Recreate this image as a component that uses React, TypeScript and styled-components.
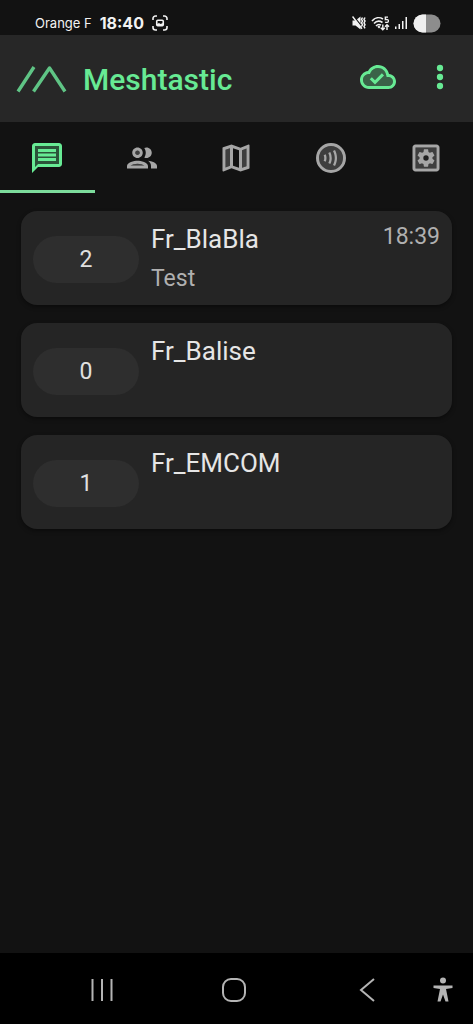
import React, { useState } from "react";
import styled, { createGlobalStyle } from "styled-components";

const GlobalStyle = createGlobalStyle`
  *, *::before, *::after { box-sizing: border-box; }
  body {
    margin: 0;
    background: #121212;
    font-family: Roboto, "Noto Sans", sans-serif;
  }
  button {
    margin: 0;
    padding: 0;
    border: 0;
    background: none;
    font: inherit;
    color: inherit;
    cursor: pointer;
  }
  svg { display: block; flex: none; }
`;

const Screen = styled.div`
  display: flex;
  flex-direction: column;
  min-height: 100vh;
`;

const StatusBar = styled.div`
  display: flex;
  justify-content: space-between;
  align-items: center;
  height: 35px;
  padding: 11px 32px 0 35px;
  color: #f2f2f2;
  font-family: Inter, sans-serif;
  font-size: 13px;
`;

const StatusGroup = styled.div<{ $gap: number }>`
  display: flex;
  align-items: center;
  gap: ${(p) => p.$gap}px;
`;

const Clock = styled.span`
  font-size: 16px;
  font-weight: 700;
`;

const Header = styled.header`
  display: flex;
  align-items: center;
  height: 87px;
  padding: 0 15px 0 16px;
  background: #272727;
  color: #67ea94;
`;

const Title = styled.h1`
  flex: 1;
  margin: 0 0 0 16px;
  padding-top: 2px;
  font-size: 30px;
  font-weight: 500;
  line-height: 36px;
`;

const Actions = styled.div`
  display: flex;
  gap: 26px;
  padding-bottom: 4px;
`;

const TabBar = styled.div`
  display: flex;
  height: 71px;
`;

const Tab = styled.button<{ $active: boolean }>`
  flex: 1;
  display: flex;
  align-items: center;
  justify-content: center;
  border-top: 3px solid transparent;
  border-bottom: 3px solid ${(p) => (p.$active ? "#7ddc9c" : "transparent")};
  color: ${(p) => (p.$active ? "#67ea94" : "#a6a6a6")};
`;

const ChannelList = styled.main`
  flex: 1;
  display: flex;
  flex-direction: column;
  gap: 18px;
  padding: 18px 21px;
`;

const ChannelCard = styled.button`
  display: flex;
  align-items: flex-start;
  min-height: 94px;
  padding: 12px 12px 10px;
  border-radius: 16px;
  background: #252525;
  box-shadow: 0 2px 4px rgba(0, 0, 0, 0.4);
  text-align: left;
`;

const ChannelIndex = styled.span`
  align-self: center;
  width: 106px;
  border-radius: 24px;
  background: #2e2e2e;
  color: #e0e0e0;
  font-size: 23px;
  line-height: 47px;
  text-align: center;
`;

const ChannelText = styled.span`
  flex: 1;
  display: flex;
  flex-direction: column;
  gap: 8px;
  margin-left: 12px;
  line-height: 32px;
`;

const ChannelName = styled.span`
  color: #e6e6e6;
  font-size: 26px;
`;

const LastMessage = styled.span`
  color: #b0b0b0;
  font-size: 23px;
`;

const Time = styled.time`
  color: #b0b0b0;
  font-size: 23px;
  line-height: 28px;
`;

const NavBar = styled.nav`
  display: flex;
  align-items: center;
  height: 71px;
  padding: 2px 20px 0 36px;
  background: #000;
  color: #b4b4b4;
`;

const NavButton = styled.button<{ $grow?: boolean }>`
  flex: ${(p) => (p.$grow ? "1" : "none")};
  display: flex;
  justify-content: center;
  align-items: center;
  height: 48px;
`;

const Icon = ({ children }: { children: React.ReactNode }) => (
  <svg width="36" height="36" viewBox="0 0 24 24" fill="currentColor" aria-hidden="true">
    {children}
  </svg>
);

const ChatIcon = () => (
  <Icon>
    <path opacity=".3" d="M4 18l2-2h14V4H4v14z" />
    <path d="M20 2H4c-1.1 0-1.99.9-1.99 2L2 22l4-4h14c1.1 0 2-.9 2-2V4c0-1.1-.9-2-2-2zm0 14H6l-2 2V4h16v12z" />
    <path d="M6 12h12v2H6zM6 9h12v2H6zM6 6h12v2H6z" />
  </Icon>
);

const PeopleIcon = () => (
  <Icon>
    <path opacity=".3" d="M4.34 17h9.32c-.84-.58-2.87-1.25-4.66-1.25s-3.82.67-4.66 1.25z" />
    <circle opacity=".3" cx="9" cy="8.5" r="1.5" />
    <path d="M9 12c1.93 0 3.5-1.57 3.5-3.5S10.93 5 9 5 5.5 6.57 5.5 8.5 7.07 12 9 12zm0-5c.83 0 1.5.67 1.5 1.5S9.83 10 9 10s-1.5-.67-1.5-1.5S8.17 7 9 7zm0 6.75c-2.34 0-7 1.17-7 3.5V19h14v-1.75c0-2.33-4.66-3.5-7-3.5zM4.34 17c.84-.58 2.87-1.25 4.66-1.25s3.82.67 4.66 1.25H4.34zm11.7-3.19c1.16.84 1.96 1.96 1.96 3.44V19h4v-1.75c0-2.02-3.5-3.17-5.96-3.44zM15 12c1.93 0 3.5-1.57 3.5-3.5S16.93 5 15 5c-.54 0-1.04.13-1.5.35.63.89 1 1.98 1 3.15s-.37 2.26-1 3.15c.46.22.96.35 1.5.35z" />
  </Icon>
);

const MapIcon = () => (
  <Icon>
    <path opacity=".3" d="M5 18.31l3-1.16V5.45L5 6.46zm11 .24l3-1.01V5.69l-3 1.17z" />
    <path d="M20.5 3l-.16.03L15 5.1 9 3 3.36 4.9c-.21.07-.36.25-.36.48V20.5c0 .28.22.5.5.5l.16-.03L9 18.9l6 2.1 5.64-1.9c.21-.07.36-.25.36-.48V3.5c0-.28-.22-.5-.5-.5zM8 17.15l-3 1.16V6.46l3-1.01v11.7zm6 1.38l-4-1.4V5.47l4 1.4v11.66zm5-.99l-3 1.01V6.86l3-1.16v11.84z" />
  </Icon>
);

const ContactlessIcon = () => (
  <Icon>
    <circle cx="12" cy="12" r="8" opacity=".3" />
    <circle cx="12" cy="12" r="9" fill="none" stroke="currentColor" strokeWidth="2" />
    <path d="M7.1 10.18c.26.56.39 1.16.4 1.8.01.63-.13 1.25-.4 1.86l1.37.62c.37-.81.55-1.65.54-2.5-.01-.84-.19-1.65-.54-2.4zM13.33 7.33c.78 1.57 1.18 3.14 1.18 4.64 0 1.51-.4 3.09-1.18 4.69l1.35.66c.88-1.81 1.33-3.61 1.33-5.35 0-1.74-.45-3.53-1.33-5.31zM10.2 8.72c.53 1.07.8 2.21.8 3.4 0 1.17-.26 2.23-.78 3.15l1.3.74c.65-1.15.98-2.45.98-3.89 0-1.42-.32-2.79-.96-4.07z" />
  </Icon>
);

const SettingsIcon = () => (
  <Icon>
    <path opacity=".3" d="M5 5h14v14H5z" />
    <path d="M19 3H5c-1.11 0-2 .9-2 2v14c0 1.1.89 2 2 2h14c1.11 0 2-.9 2-2V5c0-1.1-.89-2-2-2zm0 16H5V5h14v14z" />
    <path
      transform="translate(4.8 4.8) scale(.6)"
      d="M19.14 12.94c.04-.3.06-.61.06-.94 0-.32-.02-.64-.07-.94l2.03-1.58c.18-.14.23-.41.12-.61l-1.92-3.32c-.12-.22-.37-.29-.59-.22l-2.39.96c-.5-.38-1.03-.7-1.62-.94l-.36-2.54c-.04-.24-.24-.41-.48-.41h-3.84c-.24 0-.43.17-.47.41l-.36 2.54c-.59.24-1.13.57-1.62.94l-2.39-.96c-.22-.08-.47 0-.59.22L2.74 8.87c-.12.21-.08.47.12.61l2.03 1.58c-.05.3-.09.63-.09.94s.02.64.07.94l-2.03 1.58c-.18.14-.23.41-.12.61l1.92 3.32c.12.22.37.29.59.22l2.39-.96c.5.38 1.03.7 1.62.94l.36 2.54c.05.24.24.41.48.41h3.84c.24 0 .44-.17.47-.41l.36-2.54c.59-.24 1.13-.56 1.62-.94l2.39.96c.22.08.47 0 .59-.22l1.92-3.32c.12-.22.07-.47-.12-.61l-2.01-1.58z"
    />
    <circle cx="12" cy="12" r="1.8" fill="#202020" />
  </Icon>
);

const CloudDoneIcon = () => (
  <Icon>
    <path opacity=".3" d="M19.21 12.04l-1.53-.11-.3-1.5C16.88 7.86 14.62 6 12 6 9.94 6 8.08 7.14 7.12 8.96l-.5.95-1.07.11C3.53 10.24 2 11.95 2 14c0 2.21 1.79 4 4 4h13c1.65 0 3-1.35 3-3 0-1.55-1.22-2.86-2.79-2.96z" />
    <path d="M19.35 10.04C18.67 6.59 15.64 4 12 4 9.11 4 6.61 5.64 5.36 8.04 2.35 8.36 0 10.91 0 14c0 3.31 2.69 6 6 6h13c2.76 0 5-2.24 5-5 0-2.64-2.05-4.78-4.65-4.96zM19 18H6c-2.21 0-4-1.79-4-4 0-2.05 1.53-3.76 3.56-3.97l1.07-.11.5-.95C8.08 7.14 9.94 6 12 6c2.62 0 4.88 1.86 5.39 4.43l.3 1.5 1.53.11c1.56.1 2.78 1.41 2.78 2.96 0 1.65-1.35 3-3 3z" />
    <path d="M10 14.18l-2.09-2.09L6.5 13.5 10 17l6.01-6.01-1.41-1.41z" />
  </Icon>
);

const MoreIcon = () => (
  <Icon>
    <circle cx="12" cy="6" r="2.1" />
    <circle cx="12" cy="12" r="2.1" />
    <circle cx="12" cy="18" r="2.1" />
  </Icon>
);

const Logo = () => (
  <svg width="51" height="28" viewBox="0 0 51 28" fill="none" stroke="#5fc485" strokeWidth="3.4" strokeLinejoin="round" aria-hidden="true">
    <path d="M2 26.5 L18 2 M17.500 26.5 L33.500 3 L49 26.500" />
  </svg>
);

const CaptureIcon = () => (
  <svg width="16" height="16" viewBox="0 0 16 16" fill="none" stroke="currentColor" strokeWidth="1.600" aria-hidden="true">
    <path d="M1 5V3.500A2.500 2.500 0 0 1 3.500 1H5M11 1h1.500A2.500 2.500 0 0 1 15 3.500V5M15 11v1.500a2.500 2.500 0 0 1-2.500 2.500H11M5 15H3.500A2.500 2.500 0 0 1 1 12.500V11" />
    <rect x="4.750" y="5.250" width="6.500" height="5.500" rx="1" />
    <path d="M5 10.500V9l2-1 1.500 1 2.500-1v2.500z" fill="currentColor" stroke="none" />
  </svg>
);

const MutedIcon = () => (
  <svg width="14" height="14" viewBox="0 0 14 14" fill="none" stroke="currentColor" strokeWidth="1.500" aria-hidden="true">
    <path d="M.5 4.500H3.500L8.500.5v13l-5-4H.5z" fill="currentColor" stroke="none" />
    <path d="M1.500 0 11 12" stroke="#121212" strokeWidth="1.300" />
    <path d="M.5.500 10 12.800M10.500 1.500l-1 1.800 1 1.800-1 1.800 1 1.800-1 1.800M13 1.500l-1 1.800 1 1.800-1 1.800 1 1.800-1 1.800 1 1.800" />
  </svg>
);

const WifiIcon = () => (
  <svg width="19" height="15" viewBox="0 0 19 15" fill="none" stroke="currentColor" strokeWidth="1.600" aria-hidden="true">
    <path d="M1 5C4 1.300 8.500.8 12 3M3 7.500C5.300 5 8.500 4.600 11.500 6.500M5 10C6.500 8.400 8.500 8.200 10 9.200" />
    <path d="M6.300 10.800 8 9.500l1.500 1.500L8 12.500z" fill="currentColor" stroke="none" />
    <path d="M17 1.200h-2.700v2.500c2.700-.6 3.200.4 3.100 1.400-.1 1.300-1.900 1.700-3.300.9" strokeWidth="1.300" />
    <path d="M11.800 8.500v5M9.800 11.700l2 2 2-2M16 14V9M14 10.700l2-2 2 2" strokeWidth="1.400" />
  </svg>
);

const SignalIcon = () => (
  <svg width="13" height="14" viewBox="0 0 13 14" fill="currentColor" aria-hidden="true">
    <path d="M0 10.500h1.500V13H0zM3.500 8H5v5H3.500zM7 5h1.500v8H7zM10.500 1H12v12h-1.500z" />
  </svg>
);

const BatteryIcon = () => (
  <svg width="28" height="19" viewBox="0 0 28 19" aria-hidden="true">
    <rect x="0.500" y="0.500" width="27" height="18" rx="9" fill="#8d8d8d" />
    <path d="M13 .500V18.500H9.500a9 9 0 0 1 0-18z" fill="#efefef" />
  </svg>
);

const tabs = [
  { label: "Messages", icon: ChatIcon },
  { label: "Nodes", icon: PeopleIcon },
  { label: "Map", icon: MapIcon },
  { label: "Channel", icon: ContactlessIcon },
  { label: "Settings", icon: SettingsIcon },
];

const channels = [
  { index: 2, name: "Fr_BlaBla", message: "Test", time: "18:39" },
  { index: 0, name: "Fr_Balise" },
  { index: 1, name: "Fr_EMCOM" },
];

export default function App() {
  const [active, setActive] = useState(0);
  return (
    <Screen>
      <GlobalStyle />
      <StatusBar>
        <StatusGroup $gap={8}>
          <span>Orange F</span>
          <Clock>18:40</Clock>
          <CaptureIcon />
        </StatusGroup>
        <StatusGroup $gap={5}>
          <MutedIcon />
          <WifiIcon />
          <SignalIcon />
          <BatteryIcon />
        </StatusGroup>
      </StatusBar>
      <Header>
        <Logo />
        <Title>Meshtastic</Title>
        <Actions>
          <button aria-label="Connection status"><CloudDoneIcon /></button>
          <button aria-label="More options"><MoreIcon /></button>
        </Actions>
      </Header>
      <TabBar role="tablist">
        {tabs.map(({ label, icon: TabIcon }, i) => (
          <Tab
            key={label}
            role="tab"
            aria-label={label}
            aria-selected={i === active}
            $active={i === active}
            onClick={() => setActive(i)}
          >
            <TabIcon />
          </Tab>
        ))}
      </TabBar>
      <ChannelList>
        {channels.map((c) => (
          <ChannelCard key={c.name}>
            <ChannelIndex>{c.index}</ChannelIndex>
            <ChannelText>
              <ChannelName>{c.name}</ChannelName>
              {c.message && <LastMessage>{c.message}</LastMessage>}
            </ChannelText>
            {c.time && <Time>{c.time}</Time>}
          </ChannelCard>
        ))}
      </ChannelList>
      <NavBar aria-label="System navigation">
        <NavButton $grow aria-label="Recent apps">
          <svg width="24" height="24" viewBox="0 0 24 24" stroke="currentColor" strokeWidth="2">
            <path d="M2.500 1v22M12 1v22M21.500 1v22" />
          </svg>
        </NavButton>
        <NavButton $grow aria-label="Home">
          <svg width="26" height="26" viewBox="0 0 26 26" fill="none" stroke="currentColor" strokeWidth="2">
            <rect x="2" y="2" width="22" height="22" rx="8" />
          </svg>
        </NavButton>
        <NavButton $grow aria-label="Back">
          <svg width="16" height="26" viewBox="0 0 16 26" fill="none" stroke="currentColor" strokeWidth="2">
            <path d="M15 2 2 13l13 11" />
          </svg>
        </NavButton>
        <NavButton aria-label="Accessibility">
          <svg width="20" height="26" viewBox="0 0 20 26" fill="currentColor">
            <circle cx="10" cy="3.500" r="3" />
            <path d="M.5 8.500h19v2.500L13 12l2.500 12.500h-3L10 17.500 7.500 24.500h-3L7 12 .5 11z" />
          </svg>
        </NavButton>
      </NavBar>
    </Screen>
  );
}
